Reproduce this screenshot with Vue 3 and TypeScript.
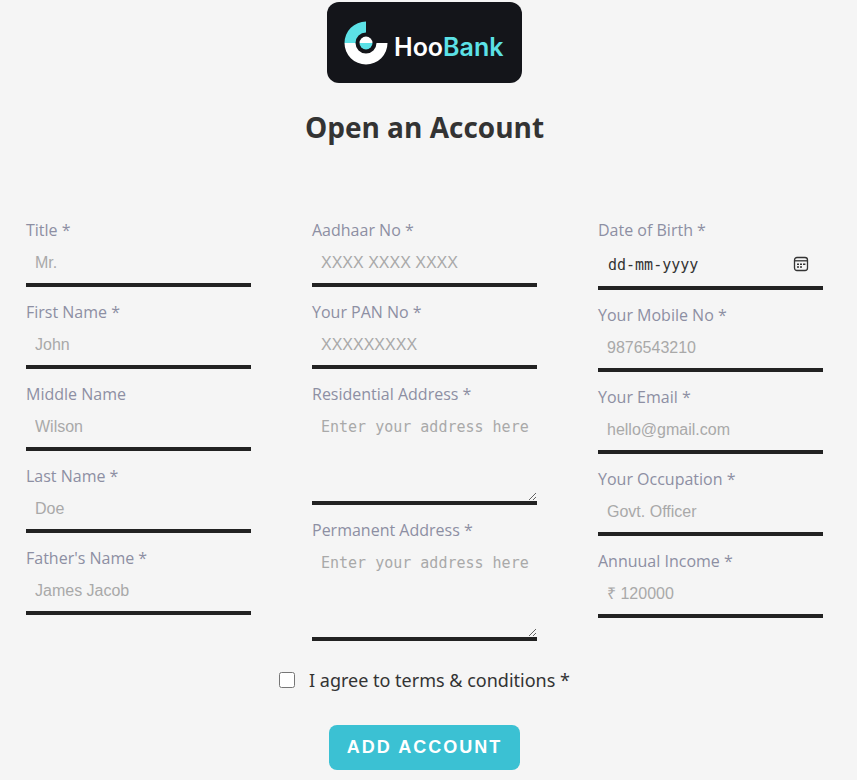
<script setup lang="ts">
import { reactive, ref } from 'vue'

interface Field {
  id: string
  label: string
  placeholder: string
  kind: 'text' | 'email' | 'tel' | 'date' | 'area'
}

const columns: Field[][] = [
  [
    { id: 'title', label: 'Title *', placeholder: 'Mr.', kind: 'text' },
    { id: 'first-name', label: 'First Name *', placeholder: 'John', kind: 'text' },
    { id: 'middle-name', label: 'Middle Name', placeholder: 'Wilson', kind: 'text' },
    { id: 'last-name', label: 'Last Name *', placeholder: 'Doe', kind: 'text' },
    { id: 'father-name', label: "Father's Name *", placeholder: 'James Jacob', kind: 'text' },
  ],
  [
    { id: 'aadhaar', label: 'Aadhaar No *', placeholder: 'XXXX XXXX XXXX', kind: 'text' },
    { id: 'pan', label: 'Your PAN No *', placeholder: 'XXXXXXXXX', kind: 'text' },
    { id: 'residential', label: 'Residential Address *', placeholder: 'Enter your address here', kind: 'area' },
    { id: 'permanent', label: 'Permanent Address *', placeholder: 'Enter your address here', kind: 'area' },
  ],
  [
    { id: 'birth', label: 'Date of Birth *', placeholder: 'dd-mm-yyyy', kind: 'date' },
    { id: 'mobile', label: 'Your Mobile No *', placeholder: '9876543210', kind: 'tel' },
    { id: 'email', label: 'Your Email *', placeholder: 'hello@gmail.com', kind: 'email' },
    { id: 'occupation', label: 'Your Occupation *', placeholder: 'Govt. Officer', kind: 'text' },
    { id: 'income', label: 'Annuual Income *', placeholder: '₹ 120000', kind: 'text' },
  ],
]

const values = reactive<Record<string, string>>({})
const agreed = ref(false)
</script>

<template>
  <main class="page">
    <div class="logo">
      <svg class="mark" viewBox="0 0 44 44" aria-hidden="true">
        <path d="M0.5 22A21.5 21.5 0 0 1 22 0.5V11.5A10.5 10.5 0 0 0 11.5 22Z" fill="#5ce1e6" />
        <path d="M0.5 22H11.5A10.5 10.5 0 0 0 32.5 22H43.5A21.5 21.5 0 0 1 0.5 22Z" fill="#fff" />
        <path d="M15.5 22A6.5 6.5 0 0 1 28.5 22Z" fill="#fff" />
        <path d="M15.5 22A6.5 6.5 0 0 0 28.5 22Z" fill="#5ce1e6" />
      </svg>
      <span class="brand">Hoo<span class="accent">Bank</span></span>
    </div>

    <h1>Open an Account</h1>

    <form @submit.prevent>
      <div class="columns">
        <div v-for="(column, index) in columns" :key="index" class="column">
          <div v-for="field in column" :key="field.id" class="field">
            <label :for="field.id">{{ field.label }}</label>
            <textarea
              v-if="field.kind === 'area'"
              :id="field.id"
              v-model="values[field.id]"
              class="control area"
              :placeholder="field.placeholder"
            ></textarea>
            <div v-else-if="field.kind === 'date'" class="control date">
              <input :id="field.id" v-model="values[field.id]" type="text" :placeholder="field.placeholder" />
              <button type="button" class="picker" aria-label="Choose a date">
                <svg viewBox="0 0 16 16" aria-hidden="true">
                  <rect x="1.5" y="1.5" width="13" height="13" rx="2.5" fill="none" stroke="#333" stroke-width="1.3" />
                  <path d="M2 4.8H14" stroke="#333" stroke-width="1.3" />
                  <path d="M4 8.3H6M7 8.3H9M10 8.3H12.4M4 11H6M7 11H9" stroke="#333" stroke-width="1.5" />
                </svg>
              </button>
            </div>
            <input
              v-else
              :id="field.id"
              v-model="values[field.id]"
              class="control"
              :type="field.kind"
              :placeholder="field.placeholder"
            />
          </div>
        </div>
      </div>

      <div class="terms">
        <input id="terms" v-model="agreed" type="checkbox" />
        <label for="terms">I agree to terms &amp; conditions *</label>
      </div>

      <button type="submit" class="submit">ADD ACCOUNT</button>
    </form>
  </main>
</template>

<style>
body {
  background: #f5f5f5;
}
</style>

<style scoped>
.page {
  box-sizing: border-box;
  padding: 2px 34px 10px 26px;
  font-family: 'Open Sans', 'Noto Sans', sans-serif;
  color: #333;
}

.logo {
  box-sizing: border-box;
  width: 195px;
  height: 81px;
  margin: 0 auto;
  padding: 0 17px;
  display: flex;
  align-items: center;
  gap: 6px;
  border-radius: 12px;
  background: #14151a;
}

.mark {
  width: 44px;
  height: 44px;
  flex: none;
}

.brand {
  padding-top: 8px;
  font: 600 25px/30px Inter, sans-serif;
  color: #fff;
}

.accent {
  color: #5ce1e6;
}

h1 {
  margin: 25px 0 72px;
  font-size: 28px;
  line-height: 38px;
  font-weight: 700;
  text-align: center;
}

.columns {
  display: grid;
  grid-template-columns: repeat(3, minmax(0, 1fr));
  gap: 61px;
}

.column {
  display: flex;
  flex-direction: column;
  gap: 13px;
}

.field label {
  display: block;
  font-size: 16px;
  line-height: 24px;
  color: #8d8fa3;
}

.control {
  display: block;
  box-sizing: border-box;
  width: 100%;
  height: 45px;
  margin: 0;
  padding: 0 9px;
  border: 0;
  border-bottom: 4px solid #222;
  border-radius: 0;
  outline: 0;
  background: transparent;
  font: 16px 'Liberation Sans', sans-serif;
  color: #333;
}

.control::placeholder {
  color: #a9a9a9;
  opacity: 1;
}

.area {
  height: 99px;
  padding: 12px 4px 10px 9px;
  font: 15px/18px 'DejaVu Sans Mono', monospace;
}

.date {
  display: flex;
  align-items: center;
  height: 48px;
}

.date input {
  flex: 1;
  min-width: 0;
  padding: 2px 1px 0;
  border: 0;
  outline: 0;
  background: transparent;
  font: 15px 'DejaVu Sans Mono', monospace;
  color: #333;
}

.date input::placeholder {
  color: #333;
  opacity: 1;
}

.picker {
  display: flex;
  padding: 5px;
  border: 0;
  background: transparent;
}

.picker svg {
  width: 16px;
  height: 16px;
}

.terms {
  display: flex;
  justify-content: center;
  align-items: center;
  gap: 14px;
  margin-top: 25px;
  font-family: 'Noto Sans', sans-serif;
  font-size: 18px;
  line-height: 28px;
}

.terms input {
  width: 16px;
  height: 16px;
  margin: 0;
}

.submit {
  display: block;
  margin: 31px auto 0;
  padding: 12px 18px;
  border: 0;
  border-radius: 8px;
  background: #3bc1d3;
  color: #fff;
  font: 700 18px/21px 'Liberation Sans', sans-serif;
  letter-spacing: 2px;
}
</style>
